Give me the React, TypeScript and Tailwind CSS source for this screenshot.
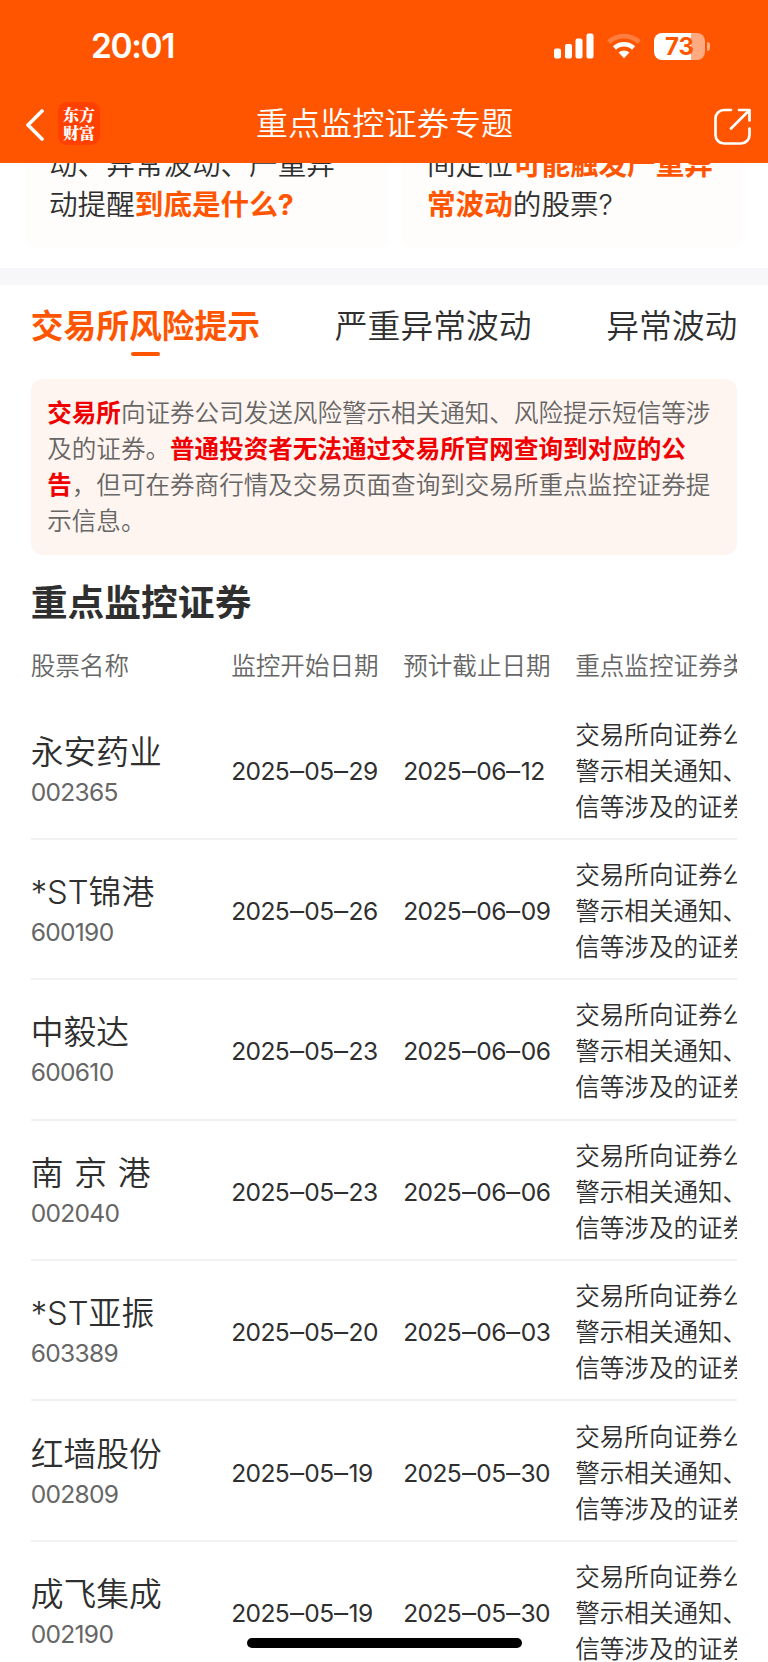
import React, { useState } from 'react';

interface Stock {
    name: string;
    code: string;
    start: string;
    end: string;
}

const tabs = ['交易所风险提示', '严重异常波动', '异常波动'];

const stocks: Stock[] = [
    { name: '永安药业', code: '002365', start: '2025–05–29', end: '2025–06–12' },
    { name: '*ST锦港', code: '600190', start: '2025–05–26', end: '2025–06–09' },
    { name: '中毅达', code: '600610', start: '2025–05–23', end: '2025–06–06' },
    { name: '南 京 港', code: '002040', start: '2025–05–23', end: '2025–06–06' },
    { name: '*ST亚振', code: '603389', start: '2025–05–20', end: '2025–06–03' },
    { name: '红墙股份', code: '002809', start: '2025–05–19', end: '2025–05–30' },
    { name: '成飞集成', code: '002190', start: '2025–05–19', end: '2025–05–30' },
];

function StatusBar() {
    return (
        <div className="flex h-[90px] items-center justify-between pl-[91px] pr-[58px] pt-[2px] text-white">
            <span className="text-[33.500px] font-semibold leading-[40px] tracking-[-1.4px]">20:01</span>
            <div className="flex items-center">
                <svg width="40" height="26" viewBox="0 0 40 26" fill="currentColor">
                    <rect x="0" y="15.5" width="7" height="10" rx="2" />
                    <rect x="11" y="11" width="7" height="14.5" rx="2" />
                    <rect x="21.5" y="5.5" width="7" height="20" rx="2" />
                    <rect x="32.5" y="0.5" width="7" height="25" rx="2" />
                </svg>
                <svg className="ml-[13px]" width="34" height="26" viewBox="0 0 34 26" fill="none" stroke="currentColor" strokeWidth="4.6">
                    <path d="M1.8 9.2a22 22 0 0 1 30.4 0" opacity="0.25" />
                    <path d="M7.4 15a14 14 0 0 1 19.2 0" />
                    <path d="M11.5 19.6a8.2 8.2 0 0 1 11 0L17 25.2z" fill="currentColor" stroke="none" />
                </svg>
                <div className="ml-[13px] flex h-[27px] w-[51px] items-center justify-center rounded-[8px] bg-[linear-gradient(90deg,#fff_73%,#ffaa80_73%)]">
                    <span className="text-[24px] font-bold leading-[27px] text-[#ff5500]">73</span>
                </div>
                <div className="ml-[2px] h-[9px] w-[3px] rounded-r-full bg-[#ffaa80]" />
            </div>
        </div>
    );
}

function NavBar() {
    return (
        <div className="grid h-[73px] grid-cols-[1fr_auto_1fr] items-start pl-[26px] pr-[15px] text-white">
            <div className="flex items-center pt-[12px]">
                <svg className="mt-[2px]" width="18" height="32" viewBox="0 0 18 32" fill="none" stroke="currentColor" strokeWidth="3.6" strokeLinecap="round" strokeLinejoin="round">
                    <path d="M16 2L2 16l14 14" />
                </svg>
                <div className="ml-[14px] flex h-[43px] w-[42px] flex-col items-center justify-center rounded-[9px] bg-[#ff4000] font-['Noto_Serif_CJK_SC','Noto_Sans_CJK_SC',serif] text-[16px] font-black leading-[18px]">
                    <span>东方</span>
                    <span>财富</span>
                </div>
            </div>
            <h1 className="-ml-[10px] pt-[14px] text-[32.2px] leading-[40px]">重点监控证券专题</h1>
            <svg className="mt-[17px] justify-self-end" width="40" height="40" viewBox="0 0 40 40" fill="none" stroke="currentColor" strokeWidth="2.7" strokeLinecap="round" strokeLinejoin="round">
                <path d="M18 3H11a8.500 8.500 0 0 0-8.500 8.500V28a8.500 8.500 0 0 0 8.500 8.500h17A8.500 8.500 0 0 0 36.500 28v-6.500" />
                <path d="M26 3h10.500v10.500M36 3.500L18 21.500" />
            </svg>
        </div>
    );
}

function DateCell({ value }: { value: string }) {
    return (
        <span className="whitespace-nowrap font-normal tracking-[-0.6px]">
            {value.split('–').map((part, i) => (
                <React.Fragment key={i}>
                    {i > 0 && <span className="mx-[1.7px] inline-block scale-x-115">–</span>}
                    {part}
                </React.Fragment>
            ))}
        </span>
    );
}

export default function App() {
    const [active, setActive] = useState(tabs[0]);

    return (
        <div className="relative flex h-[1662px] w-[768px] flex-col overflow-hidden bg-white font-['Inter','Noto_Sans_CJK_SC',sans-serif] font-[350] text-[#2f2f2f]">
            <header className="shrink-0 bg-[#ff5500]">
                <StatusBar />
                <NavBar />
            </header>

            {/* question cards, scrolled half way under the header */}
            <section className="flex h-[105px] shrink-0 items-end gap-[13px] overflow-hidden px-[25px] pb-[20px] text-[28.6px] leading-[40px]">
                <div className="w-[364px] shrink-0 rounded-[8px] bg-[#fffdfc] pb-[23px] pl-[24px]">
                    <p>动、异常波动、严重异</p>
                    <p>动提醒<b className="font-bold text-[#ff5500]">到底是什么?</b></p>
                </div>
                <div className="w-[341px] shrink-0 rounded-[8px] bg-[#fffcfc] pb-[23px] pl-[25px]">
                    <p>间定位<b className="font-bold text-[#ff5500]">可能触发严重异</b></p>
                    <p><b className="font-bold text-[#ff5500]">常波动</b>的股票?</p>
                </div>
            </section>

            <div className="h-[17px] shrink-0 bg-[#f7f7fa]" />

            <nav className="flex h-[94px] shrink-0 justify-between px-[30.7px] pt-[21px]">
                {tabs.map(tab => (
                    <button key={tab} onClick={() => setActive(tab)}
                        className={`flex flex-col items-center text-[32.77px] leading-[40px] ${
                            active === tab ? 'font-bold text-[#ff5500]' : 'font-[350]'
                        }`}>
                        {tab}
                        {active === tab && <span className="mt-[6px] h-[4px] w-[29px] rounded-full bg-[#ff5500]" />}
                    </button>
                ))}
            </nav>

            <p className="mx-[30.7px] h-[176px] shrink-0 rounded-[12px] bg-[#fff5f0] px-[16.5px] pt-[16px] text-[24.57px] leading-[36px] text-[#666]">
                <b className="font-bold text-[#f00000]">交易所</b>向证券公司发送风险警示相关通知、风险提示短信等涉<br />
                及的证券。<b className="font-bold text-[#f00000]">普通投资者无法通过交易所官网查询到对应的公<br />告</b>，但可在券商行情及交易页面查询到交易所重点监控证券提<br />
                示信息。
            </p>

            <h2 className="mx-[30.7px] mt-[24px] shrink-0 text-[36.8px] font-bold leading-[48px]">重点监控证券</h2>

            <section className="mx-[30.7px] shrink-0 overflow-hidden">
                <div className="grid h-[72.5px] grid-cols-[200.5px_172px_172px_300px] pt-[21px] text-[24.57px] leading-[36px] text-[#666]">
                    <span>股票名称</span>
                    <span>监控开始日期</span>
                    <span>预计截止日期</span>
                    <span>重点监控证券类型</span>
                </div>
                {stocks.map(stock => (
                    <div key={stock.code} className="grid h-[140.4px] grid-cols-[200.5px_172px_172px_300px] items-center border-b-2 border-[#f2f2f2] pt-[4px] text-[24.57px] leading-[36px]">
                        <div className="-mt-[2px]">
                            <div className="text-[32.77px] leading-[44px] [word-spacing:1.5px]">{stock.name}</div>
                            <div className="font-normal tracking-[-0.7px] text-[#666]">{stock.code}</div>
                        </div>
                        <DateCell value={stock.start} />
                        <DateCell value={stock.end} />
                        <p>交易所向证券公司发送风险<br />警示相关通知、风险提示短<br />信等涉及的证券</p>
                    </div>
                ))}
            </section>

            {/* home indicator */}
            <div className="absolute bottom-[14px] left-[247px] h-[10px] w-[275px] rounded-full bg-black" />
        </div>
    );
}
